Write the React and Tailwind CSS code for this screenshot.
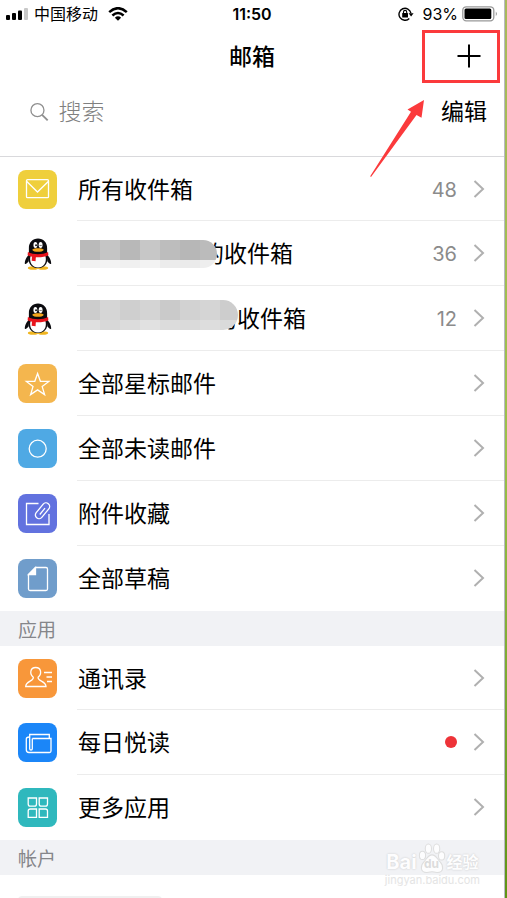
import React from 'react';

const Penguin = () => (
  <svg width="28" height="32" viewBox="0 0 28 33" aria-hidden="true">
    <ellipse cx="9" cy="31" rx="5.5" ry="1.8" fill="#f0b51f" />
    <ellipse cx="19" cy="31" rx="5.5" ry="1.8" fill="#f0b51f" />
    <path d="M5 17C2.5 19 .3 23 .4 26.5c.8.9 2.8-.7 4-2.5zM23 17c2.5 2 4.7 6 4.6 9.5-.8.9-2.8-.7-4-2.5z" fill="#0b0b0f" />
    <path d="M14 .5C8.5.5 4.6 4.5 4.6 10.5v6C3 23 5 31 14 31s11-8 9.400-14.500v-6C23.400 4.500 19.500.5 14 .5z" fill="#0b0b0f" />
    <path d="M6.5 18h15c2 6-1 12.500-7.500 12.500S4.500 24 6.500 18z" fill="#fff" />
    <ellipse cx="11.300" cy="7.200" rx="2" ry="3" fill="#fff" />
    <ellipse cx="16.700" cy="7.200" rx="2" ry="3" fill="#fff" />
    <circle cx="12" cy="7.400" r="1" fill="#111" />
    <path d="M15.9 8q.8-1.600 1.600 0" stroke="#111" strokeWidth=".9" fill="none" />
    <path d="M8 12c2.500-1.800 9.500-1.800 12 0-1.500 3-10.500 3-12 0z" fill="#f3a61c" />
    <path d="M3.6 14.5c6 3 14.800 3 20.800 0l.3 3.300C19 20.600 9 20.600 3.300 17.800z" fill="#e8141c" />
    <path d="M7.8 18.5l4 .8-.3 4.700-4-.5z" fill="#e8141c" />
  </svg>
);

const Tile = ({ color, children }) => (
  <span className={`w-[39px] h-[39px] shrink-0 rounded-lg ${color}`}>
    <svg viewBox="0 0 39 39" className="w-full h-full" fill="none" stroke="#fff" strokeWidth="1.3" aria-hidden="true">
      {children}
    </svg>
  </span>
);

const icons = {
  inbox: (
    <Tile color="bg-[#efcf3c]">
      <rect x="8.5" y="9.7" width="22" height="18" rx="1" />
      <path d="M8.8 11.5L19.5 22 30.3 11.5" />
    </Tile>
  ),
  qq: (
    <span className="w-[39px] shrink-0 flex justify-center">
      <Penguin />
    </span>
  ),
  star: (
    <Tile color="bg-[#f4b64e]">
      <path d="M19.6 9.5l2.8 7.800 8.500.1-6.700 5.200 2.400 8-7-4.700-7 4.700 2.400-8-6.700-5.200 8.500-.1z" />
    </Tile>
  ),
  unread: (
    <Tile color="bg-[#4fa9e4]">
      <circle cx="19.7" cy="19.7" r="8.5" />
    </Tile>
  ),
  attachment: (
    <Tile color="bg-[#6272df]">
      <path d="M20.5 9.5H8.5v21H31V20" />
      <path d="M27 14.2l-5.200 6.300M30.800 14.800l-7 8.500a3.600 3.600 0 0 1-5.600-4.600l7-8.500a3.600 3.600 0 0 1 5.600 4.600" />
    </Tile>
  ),
  draft: (
    <Tile color="bg-[#709dcb]">
      <path d="M17.5 8.5H28q1.500 0 1.500 1.500v20q0 1.500-1.500 1.500H12q-1.500 0-1.500-1.500V15.500z" />
      <path d="M17.5 8.5v7h-7z" fill="#fff" />
    </Tile>
  ),
  contacts: (
    <Tile color="bg-[#f8973a]">
      <path d="M15.3 18.3c-4-3.300-3.200-9.800 2.400-9.800s6.400 6.500 2.400 9.800c-.5 4 7.700 3.700 7.900 9.200H7.700c.2-5.500 8.100-5.200 7.600-9.200z" />
      <path d="M26 13.5h8M28.5 18H34M29 22.500h5" />
    </Tile>
  ),
  news: (
    <Tile color="bg-[#1b86f8]">
      <path d="M14.3 15.5H33v12.500q0 1.500-1.500 1.500H11q-2.700 0-2.700-2.700V16q0-2 3.200-2" />
      <path d="M31.3 15.5v-4H11.700v14.300q0 1.200 1.300 1.200t1.300-1.200V15.500" />
    </Tile>
  ),
  apps: (
    <Tile color="bg-[#2fb8bd]">
      <path d="M10.2 10h8.300v6q0 2.200-2.200 2.200h-4q-2.100 0-2.100-2.200zM21.200 10h8.300v6q0 2.200-2.200 2.200h-4q-2.100 0-2.100-2.200z" />
      <path d="M12.3 21h6.200v8.300h-8.300V23q0-2 2.100-2zM21.200 21h6.200q2.100 0 2.100 2v6.300h-8.300z" />
    </Tile>
  ),
};

const Chevron = () => (
  <svg width="12" height="18" viewBox="0 0 12 18" fill="none" stroke="#b0b0b0" strokeWidth="2" aria-hidden="true">
    <path d="M1.5 1l8.500 8-8.500 8" />
  </svg>
);

// pixel mosaics that cover the account names
const masks = {
  first: {
    box: 'h-7 w-[137px] rounded-r-full -mr-4',
    top: ['bg-[#bababa]', 'bg-[#c5c5c5]', 'bg-[#b8b8b8]', 'bg-[#c7c7c7]', 'bg-[#bdbdbd]', 'bg-[#b7b7b7]', 'bg-[#bbbbbb]'],
    bottom: ['bg-[#f1f1f1]', 'bg-[#f3f3f3]', 'bg-[#f0f0f0]', 'bg-[#f3f3f3]', 'bg-[#ececec]', 'bg-[#ebebeb]', 'bg-[#eeeeee]'],
    bottomHeight: 'h-2',
  },
  second: {
    box: 'h-[30px] w-[158px] rounded-r-2xl -mr-6 -mt-2',
    top: ['bg-[#cccccc]', 'bg-[#d6d6d6]', 'bg-[#cfcfcf]', 'bg-[#d4d4d4]', 'bg-[#cacaca]', 'bg-[#d2d2d2]', 'bg-[#d5d5d5]', 'bg-[#cdcdcd]'],
    bottom: ['bg-[#dfdfdf]', 'bg-[#d8d8d8]', 'bg-[#dcdcdc]', 'bg-[#e1e1e1]', 'bg-[#dcdcdc]', 'bg-[#dadada]', 'bg-[#dddddd]', 'bg-[#dadada]'],
    bottomHeight: 'h-[10px]',
  },
};

const Mosaic = ({ mask }) => (
  <span className={`relative z-10 flex flex-col shrink-0 overflow-hidden ml-0.5 ${mask.box}`}>
    <span className="flex h-5">
      {mask.top.map((c, i) => <i key={i} className={`w-5 shrink-0 ${c}`} />)}
    </span>
    <span className={`flex ${mask.bottomHeight}`}>
      {mask.bottom.map((c, i) => <i key={i} className={`w-5 shrink-0 ${c}`} />)}
    </span>
  </span>
);

const mailboxes = [
  { id: 'inbox', icon: 'inbox', label: '所有收件箱', count: 48 },
  { id: 'qq1', icon: 'qq', label: '的收件箱', count: 36, mask: 'first' },
  { id: 'qq2', icon: 'qq', label: '的收件箱', count: 12, mask: 'second' },
  { id: 'star', icon: 'star', label: '全部星标邮件' },
  { id: 'unread', icon: 'unread', label: '全部未读邮件' },
  { id: 'attachment', icon: 'attachment', label: '附件收藏' },
  { id: 'draft', icon: 'draft', label: '全部草稿' },
];

const apps = [
  { id: 'contacts', icon: 'contacts', label: '通讯录' },
  { id: 'news', icon: 'news', label: '每日悦读', dot: true },
  { id: 'apps', icon: 'apps', label: '更多应用' },
];

const Row = ({ item }) => (
  <li className="group h-[65px] first:h-16">
    <a href={`#${item.id}`} className="flex h-full items-center gap-5 pl-[18px]">
      {icons[item.icon]}
      <span className="flex flex-1 h-full items-center border-b border-[#ececec] group-last:border-transparent pr-[19px]">
        <span className="flex flex-1 items-center pt-0.5 pl-px text-[23px] leading-8 text-black">
          {item.mask && <Mosaic mask={masks[item.mask]} />}
          {item.label}
        </span>
        {item.count && <span className="mr-4 pt-0.5 text-xl text-[#8b8b8b]">{item.count}</span>}
        {item.dot && <span className="mr-4 w-3 h-3 rounded-full bg-[#ee3338]" />}
        <Chevron />
      </span>
    </a>
  </li>
);

const SectionTitle = ({ children }) => (
  <h2 className="h-[35px] flex items-center px-[18px] pt-1 bg-[#f1f2f5] text-[19px] leading-7 text-[#85868a]">{children}</h2>
);

const StatusBar = () => (
  <div className="grid grid-cols-[1fr_auto_1fr] items-center h-7 px-1.5 text-black">
    <div className="flex items-center">
      <svg width="22" height="12" viewBox="0 0 22 12" aria-hidden="true">
        <rect x="0" y="7" width="4" height="5" rx="1" />
        <rect x="6" y="5" width="4" height="7" rx="1" />
        <rect x="12" y="2.5" width="4" height="9.5" rx="1" />
        <rect x="18" y="0" width="4" height="12" rx="1" fill="#c8c8c8" />
      </svg>
      <span className="ml-1.5 text-base">中国移动</span>
      <svg className="ml-2.5" width="20" height="14" viewBox="0 0 20 14" fill="none" stroke="#000" strokeWidth="2.5" aria-hidden="true">
        <path d="M1.2 5.2Q10-2.8 18.8 5.2M4.4 8.5Q10 3.400 15.600 8.500" />
        <path d="M10 13.8L6.9 10.700Q10 8 13.100 10.700z" fill="#000" stroke="none" />
      </svg>
    </div>
    <span className="text-base font-semibold">11:50</span>
    <div className="flex items-center justify-end">
      <svg width="16" height="14" viewBox="0 0 16 14" fill="none" stroke="#000" strokeWidth="1.4" aria-hidden="true">
        <path d="M11.3 11.500A6 6 0 1 1 12.900 6.200" />
        <path d="M10.6 6.200h5l-2.500 3.200z" fill="#000" stroke="none" />
        <rect x="4.200" y="6" width="5.800" height="4.400" rx=".5" fill="#000" stroke="none" />
        <path d="M5.5 6.300V5q0-1.600 1.600-1.600T8.700 5v1.300" strokeWidth="1.1" />
      </svg>
      <span className="ml-2 text-base">93%</span>
      <svg className="ml-1" width="36" height="16" viewBox="0 0 36 16" aria-hidden="true">
        <rect x=".8" y=".8" width="31" height="14" rx="3.5" fill="#fff" stroke="#999" strokeWidth="1.3" />
        <rect x="2.5" y="2.5" width="26.800" height="10.600" rx="1.5" />
        <path d="M33.8 5.5q2 2.300 0 4.600z" fill="#888" />
      </svg>
    </div>
  </div>
);

const Watermark = () => (
  <div className="absolute right-[27px] bottom-3 flex flex-col items-center opacity-90" aria-hidden="true">
    <div className="flex items-end gap-px text-white [text-shadow:0_0_2px_#c4c4c4]">
      <span className="text-xl leading-6 font-bold">Bai</span>
      <span className="relative flex">
        <svg width="28" height="31" viewBox="0 0 26 30" fill="#fff" stroke="#dcdcdc" strokeWidth="1">
          <ellipse cx="9.5" cy="5.5" rx="3" ry="4.5" />
          <ellipse cx="17.5" cy="5.5" rx="3" ry="4.5" />
          <ellipse cx="3.8" cy="12" rx="3" ry="4" />
          <ellipse cx="22.3" cy="12.5" rx="3" ry="4" />
          <path d="M13 11.5c4 0 5 4 8 7s4 10-3 10c-3 0-3-.7-5-.7s-2 .7-5 .7c-7 0-6-7-3-10s4-7 8-7z" />
        </svg>
        <span className="absolute inset-x-0 bottom-1 text-center text-xs leading-3 font-bold text-[#dadada] [text-shadow:none]">du</span>
      </span>
      <span className="text-base leading-6 font-bold">经验</span>
    </div>
    <span className="text-[11px] leading-3 text-[#e2e2e2]">jingyan.baidu.com</span>
  </div>
);

const Annotation = () => (
  <svg className="absolute right-1.5 top-7 z-20 pointer-events-none" width="132" height="150" viewBox="0 0 132 150" aria-hidden="true">
    <rect x="54.5" y="3.5" width="75" height="50" fill="none" stroke="#fb3a3c" strokeWidth="3" />
    <path d="M55 72L38.500 81.500l3.500 2.200L1.200 148.200l.8.800L47.500 87l5 2.700z" fill="#fb3a3c" />
  </svg>
);

const App = () => {
  return (
    <div className="relative flex h-screen overflow-hidden bg-white font-['Inter','Noto_Sans_CJK_SC',sans-serif]">
      <div className="flex-1 min-w-0">
        <header className="border-b border-[#d9d9dc]">
          <StatusBar />
          <div className="grid grid-cols-[1fr_auto_1fr] items-center h-14 px-[23px]">
            <h1 className="col-start-2 pt-0.5 text-[23px] leading-8 font-medium text-black">邮箱</h1>
            <button type="button" aria-label="新建" className="justify-self-end">
              <svg width="24" height="24" viewBox="0 0 24 24" stroke="#000" strokeWidth="2">
                <path d="M12 .5v23M.5 12h23" />
              </svg>
            </button>
          </div>
          <div className="flex items-start h-[72px] pt-3 pl-[30px] pr-[17px]">
            <label className="flex flex-1 min-w-0 items-center gap-2.5">
              <svg width="20" height="20" viewBox="0 0 20 20" fill="none" stroke="#8f8f8f" strokeWidth="1.4" aria-hidden="true">
                <circle cx="8" cy="8" r="7" />
                <path d="M13 13l6 6" strokeWidth="2" />
              </svg>
              <input
                type="search"
                aria-label="搜索"
                placeholder="搜索"
                className="w-full h-8 text-[23px] font-light outline-none placeholder:text-[#808080]"
              />
            </label>
            <button type="button" className="text-[23px] leading-8 text-black">编辑</button>
          </div>
        </header>

        <ul>
          {mailboxes.map((item) => <Row key={item.id} item={item} />)}
        </ul>
        <SectionTitle>应用</SectionTitle>
        <ul>
          {apps.map((item) => <Row key={item.id} item={item} />)}
        </ul>
        <SectionTitle>帐户</SectionTitle>
        <div className="flex h-16 items-center pl-[18px]">
          <span className="h-[22px] w-36 rounded bg-[#f0f0f0]" />
        </div>
      </div>

      <div className="w-[3px] shrink-0 border-l border-[#b9b9c4] bg-linear-to-b from-[#a9b95c] via-[#9cc04a] to-[#5f9414]" />

      <Annotation />
      <Watermark />
    </div>
  );
};

export default App;
